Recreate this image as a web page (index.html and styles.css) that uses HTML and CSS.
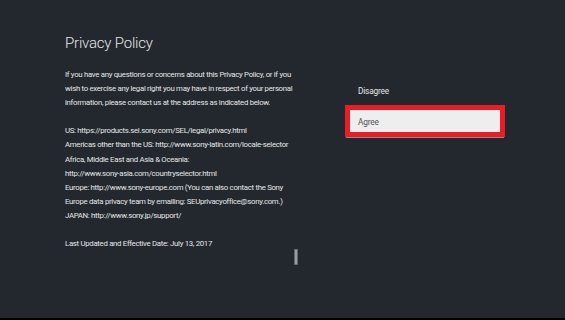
FILE: index.html
```html
<!DOCTYPE html>
<html lang="en">
<head>
  <meta charset="UTF-8">
  <meta name="viewport" content="width=device-width, initial-scale=1.0">
  <title>Privacy Policy</title>
  <link rel="stylesheet" href="styles.css">
</head>
<body>

  <div class="screen">

    <div class="policy">
      <h1>Privacy Policy</h1>
      <div class="policy-text">
        <p>If you have any questions or concerns about this Privacy Policy, or if you<br>
        wish to exercise any legal right you may have in respect of your personal<br>
        information, please contact us at the address as indicated below.</p>

        <p>US: https://products.sel.sony.com/SEL/legal/privacy.html<br>
        Americas other than the US: http://www.sony-latin.com/locale-selector<br>
        Africa, Middle East and Asia &amp; Oceania:<br>
        http://www.sony-asia.com/countryselector.html<br>
        Europe: http://www.sony-europe.com (You can also contact the Sony<br>
        Europe data privacy team by emailing: SEUprivacyoffice@sony.com.)<br>
        JAPAN: http://www.sony.jp/support/</p>

        <p>Last Updated and Effective Date: July 13, 2017</p>
      </div>
    </div>

    <div class="scrollbar"></div>

    <ul class="actions">
      <li class="option">Disagree</li>
      <li class="option selected">Agree</li>
    </ul>

  </div>

</body>
</html>
```

FILE: styles.css
```css
:root {
  --bg-color: #22282e;
  --text-color: #e4e6e7;
  --focus-color: #ed1c24;
  --button-color: #eeeeee;
}
body {
  margin: 0;
  background-color: #000;
  font-family: Roboto, "Liberation Sans", Arial, sans-serif;
  color: var(--text-color);
}
.screen {
  display: flex;
  height: 318px;
  background-color: var(--bg-color);
  overflow: hidden;
}
.policy {
  width: 229px;
  padding: 33px 0 0 65px;
  flex-shrink: 0;
}
.policy h1 {
  margin: 0 0 15px;
  font-size: 15px;
  font-weight: 300;
  line-height: 20px;
  letter-spacing: -0.2px;
}
.policy-text {
  font-size: 7.8px;
  line-height: 14.1px;
  letter-spacing: -0.3px;
  white-space: nowrap;
}
.policy-text p {
  margin: 0 0 14.1px;
}

/* small scroll indicator below the text */
.scrollbar {
  width: 2px;
  height: 14px;
  margin-top: 249px;
  background-color: #9a9ea2;
  border: 1px solid #60666b;
  flex-shrink: 0;
}
.actions {
  list-style: none;
  width: 160px;
  margin: 0 0 0 47px;
  padding: 80px 0 0;
  flex-shrink: 0;
}
.option {
  height: 22px;
  line-height: 22px;
  padding-left: 13px;
  font-size: 8.3px;
  letter-spacing: -0.2px;
  color: var(--text-color);
}
.option + .option {
  margin-top: 3px;
}
.option.selected {
  height: 19px;
  padding: 3px 0 0 8px;
  line-height: 19px;
  border: 5px solid var(--focus-color);
  background-color: var(--button-color);
  color: #4e5357;
  box-shadow: 0 2px 0 -1px #8a8d90;
}
```
